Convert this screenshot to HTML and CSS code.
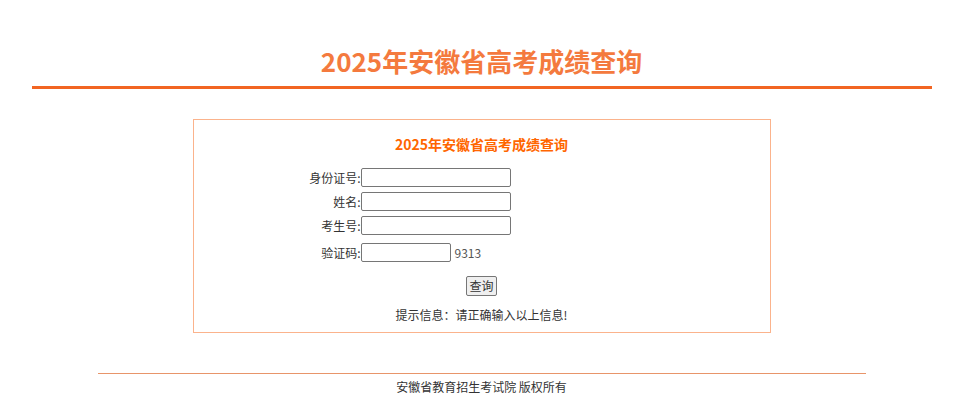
FILE: index.html
```html
<!DOCTYPE html>
<html lang="zh-CN">
<head>
  <meta charset="UTF-8">
  <title>2025年安徽省高考成绩查询</title>
  <link rel="stylesheet" href="styles.css">
</head>
<body>
  <div class="page">
    <!-- 页头 -->
    <div class="header">
      <h1>2025年安徽省高考成绩查询</h1>
    </div>

    <!-- 查询表单 -->
    <div class="query-box">
      <h2>2025年安徽省高考成绩查询</h2>
      <form class="query-form" onsubmit="return false;">
        <label for="sfzh">身份证号:</label>
        <div class="field"><input type="text" id="sfzh"></div>
        <label for="xm">姓名:</label>
        <div class="field"><input type="text" id="xm"></div>
        <label for="ksh">考生号:</label>
        <div class="field"><input type="text" id="ksh"></div>
        <label for="yzm" class="captcha-label">验证码:</label>
        <div class="field captcha"><input type="text" id="yzm" class="short"><span class="code">9313</span></div>
      </form>
      <div class="actions">
        <button type="button">查询</button>
      </div>
      <p class="tip">提示信息：请正确输入以上信息!</p>
    </div>

    <!-- 页脚 -->
    <div class="footer">安徽省教育招生考试院 版权所有</div>
  </div>
</body>
</html>
```

FILE: styles.css
```css
body {
  margin: 0;
  font-family: "Noto Sans CJK SC", "Liberation Sans", sans-serif;
  font-size: 12px;
  color: #333;
  background: #fff;
}
.page {
  width: 963px;
}
.header {
  width: 900px;
  margin: 0 auto;
  padding-top: 41px;
  border-bottom: 3px solid #f26522;
}
.header h1 {
  margin: 0;
  height: 45px;
  line-height: 40px;
  text-align: center;
  font-size: 26px;
  font-weight: bold;
  color: #f47a3e;
}
.query-box {
  width: 576px;
  margin: 30px auto 0;
  border: 1px solid #fbb38c;
  padding-bottom: 8px;
}
.query-box h2 {
  margin: 12px 0 0;
  text-align: center;
  font-size: 14px;
  line-height: 24px;
  color: #ff6600;
}
.query-form {
  display: grid;
  grid-template-columns: 167px auto;
  grid-template-rows: 19px 19px 19px 22px;
  row-gap: 5px;
  margin-top: 12px;
  align-items: center;
}
.query-form label {
  text-align: right;
  line-height: 19px;
}
.query-form .captcha-label {
  margin-top: 3px;
}
.field input {
  box-sizing: border-box;
  width: 150px;
  height: 19px;
  margin: 0;
  padding: 1px 2px;
  border: 1px solid #767676;
  border-radius: 2px;
  font-size: 12px;
}
.field.captcha {
  margin-top: 3px;
  display: flex;
  align-items: center;
}
.field input.short {
  width: 90px;
}
.code {
  margin-left: 4px;
  color: #555;
  font-size: 12px;
}
.actions {
  margin-top: 14px;
  text-align: center;
}
.actions button {
  font-family: "Noto Sans CJK SC", sans-serif;
  font-size: 12px;
  height: 20px;
  padding: 0 2px;
  border: 1px solid #767676;
  border-radius: 2px;
  background: #efefef;
  color: #333;
  line-height: 16px;
}
.tip {
  margin: 10px 0 0;
  text-align: center;
  line-height: 18px;
}
.footer {
  width: 768px;
  margin: 40px auto 0;
  border-top: 1px solid #e8956a;
  padding-top: 4px;
  text-align: center;
  line-height: 18px;
}
```
